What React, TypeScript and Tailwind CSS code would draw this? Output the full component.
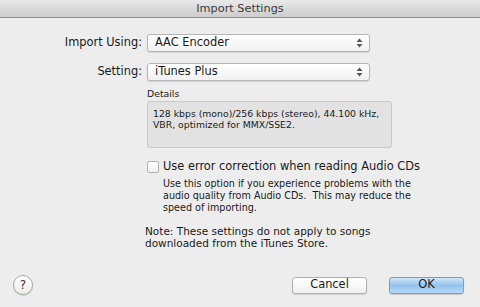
import React from "react";

function Popup({ value }: { value: string }) {
  return (
    <div className="flex h-[18px] w-[223px] items-center justify-between rounded-[3px] border border-[#b5b5b5] bg-gradient-to-b from-[#ffffff] to-[#f1f1f1] pl-[7px] pr-[6px] shadow-[0_1px_1px_rgba(0,0,0,0.12)]">
      <span className="text-[11.4px] leading-none text-[#1a1a1a]">{value}</span>
      <svg width="7" height="10" viewBox="0 0 7 10">
        <path d="M3.5 0.5 L6.5 4 H0.5 Z" fill="#555" />
        <path d="M3.5 9.5 L6.5 6 H0.5 Z" fill="#555" />
      </svg>
    </div>
  );
}

export default function App() {
  return (
    <div
      className="flex h-[307px] w-[480px] flex-col overflow-hidden bg-[#ededed] text-[#1a1a1a]"
      style={{ fontFamily: '"DejaVu Sans", "Noto Sans", sans-serif' }}
    >
      <div className="flex h-[18px] shrink-0 items-center justify-center border-b border-[#8c8c8c] bg-gradient-to-b from-[#e9e9e9] to-[#cdcdcd]">
        <span className="text-[11.3px] leading-none text-[#3a3a3a]">Import Settings</span>
      </div>

      <div className="flex flex-col pl-[147px] pt-[16px]">
        <div className="relative flex items-center">
          <span className="absolute right-[calc(100%+5px)] whitespace-nowrap text-[11.4px] leading-none">Import Using:</span>
          <Popup value="AAC Encoder" />
        </div>
        <div className="relative mt-[11px] flex items-center">
          <span className="absolute right-[calc(100%+5px)] whitespace-nowrap text-[11.4px] leading-none">Setting:</span>
          <Popup value="iTunes Plus" />
        </div>

        <div className="mt-[7px] text-[9.3px] leading-[12px]">Details</div>
        <div className="mt-[1px] h-[47px] w-[245px] rounded-[3px] border border-[#c9c9c9] bg-[#e2e2e2] px-[5px] pt-[7px] text-[9.3px] leading-[10.5px]">
          128 kbps (mono)/256 kbps (stereo), 44.100 kHz,
          <br />
          VBR, optimized for MMX/SSE2.
        </div>

        <div className="mt-[13px] flex items-center">
          <div className="h-[12px] w-[12px] rounded-[2px] border border-[#b3b3b3] bg-gradient-to-b from-white to-[#f0f0f0]" />
          <span className="ml-[4px] text-[11.4px] leading-none">Use error correction when reading Audio CDs</span>
        </div>
        <div className="ml-[16px] mt-[5px] whitespace-nowrap text-[9.6px] leading-[12px]">
          Use this option if you experience problems with the
          <br />
          audio quality from Audio CDs.&nbsp; This may reduce the
          <br />
          speed of importing.
        </div>

        <div className="-ml-[2px] mt-[11px] whitespace-nowrap text-[10.5px] leading-[12px]">
          Note: These settings do not apply to songs
          <br />
          downloaded from the iTunes Store.
        </div>
      </div>

      <div className="mt-auto flex items-center pb-[12px] pl-[13px] pr-[16px]">
        <div className="flex h-[20px] w-[20px] items-center justify-center rounded-full border border-[#a8a8a8] bg-gradient-to-b from-white to-[#ececec] shadow-[0_1px_1px_rgba(0,0,0,0.15)]">
          <span className="text-[12px] leading-none text-[#333]">?</span>
        </div>
        <div className="ml-auto flex h-[17px] w-[75px] items-center justify-center rounded-[3px] border border-[#b0b0b0] bg-gradient-to-b from-white to-[#f0f0f0] shadow-[0_1px_1px_rgba(0,0,0,0.12)]">
          <span className="text-[11.4px] leading-none">Cancel</span>
        </div>
        <div className="ml-[22px] flex h-[17px] w-[75px] items-center justify-center rounded-[3px] border border-[#7d9ec2] bg-gradient-to-b from-[#d2e6f9] via-[#93c2ee] to-[#b8d9f7] shadow-[0_1px_1px_rgba(0,0,0,0.15)]">
          <span className="text-[11.4px] leading-none">OK</span>
        </div>
      </div>
    </div>
  );
}
